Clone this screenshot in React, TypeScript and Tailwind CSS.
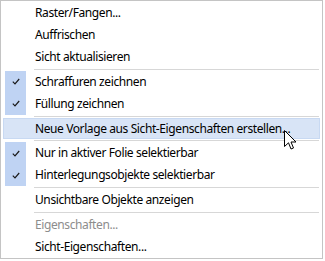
import React from "react";

type Item =
  | { kind: "item"; label: string; checked?: boolean; disabled?: boolean; hover?: boolean }
  | { kind: "sep" };

const items: Item[] = [
  { kind: "item", label: "Raster/Fangen..." },
  { kind: "item", label: "Auffrischen" },
  { kind: "item", label: "Sicht aktualisieren" },
  { kind: "sep" },
  { kind: "item", label: "Schraffuren zeichnen", checked: true },
  { kind: "item", label: "Füllung zeichnen", checked: true },
  { kind: "sep" },
  { kind: "item", label: "Neue Vorlage aus Sicht-Eigenschaften erstellen...", hover: true },
  { kind: "sep" },
  { kind: "item", label: "Nur in aktiver Folie selektierbar", checked: true },
  { kind: "item", label: "Hinterlegungsobjekte selektierbar", checked: true },
  { kind: "sep" },
  { kind: "item", label: "Unsichtbare Objekte anzeigen" },
  { kind: "sep" },
  { kind: "item", label: "Eigenschaften...", disabled: true },
  { kind: "item", label: "Sicht-Eigenschaften..." },
];

function Check() {
  return (
    <svg width="8" height="7" viewBox="0 0 8 7" className="block">
      <path d="M0.8 3.6 L3 5.8 L7.2 1" fill="none" stroke="#1a1a1a" strokeWidth="1.2" />
    </svg>
  );
}

function Cursor() {
  return (
    <svg width="13" height="21" viewBox="0 0 13 21" className="absolute left-[284px] top-[130px]">
      <path
        d="M0.5 0.5 L0.5 16.5 L4.5 12.8 L7 19 L9.5 18 L7 12 L12 12 Z"
        fill="#ffffff"
        stroke="#000000"
        strokeWidth="1"
        strokeLinejoin="miter"
      />
    </svg>
  );
}

export default function App() {
  return (
    <div className="relative w-[325px] h-[261px] bg-white" style={{ fontFamily: '"Segoe UI", "Noto Sans", sans-serif' }}>
      <div className="w-[323px] h-[259px] border border-[#c4c4c4] bg-white pt-[1px] px-[2px] flex flex-col">
        {items.map((it, i) =>
          it.kind === "sep" ? (
            <div key={i} className="h-[3px] flex items-center pl-[31px] pr-[1px]">
              <div className="h-px w-full bg-[#d7d7d7]" />
            </div>
          ) : (
            <div
              key={i}
              className={
                "h-[22px] flex items-center text-[12px] leading-none tracking-[-0.4px] " +
                (it.hover ? "bg-[#d8e4f6] border border-[#c8d9f2]" : "border border-transparent")
              }
            >
              <div className="w-[29px] h-full flex items-center justify-start">
                {it.checked ? (
                  <div className="w-[21px] h-[22px] ml-[1px] bg-[#bfd3f3] flex items-center justify-center">
                    <Check />
                  </div>
                ) : null}
              </div>
              <span className={"pl-[2px] " + (it.disabled ? "text-[#8d8d8d]" : "text-black")}>{it.label}</span>
            </div>
          )
        )}
      </div>
      <Cursor />
    </div>
  );
}
